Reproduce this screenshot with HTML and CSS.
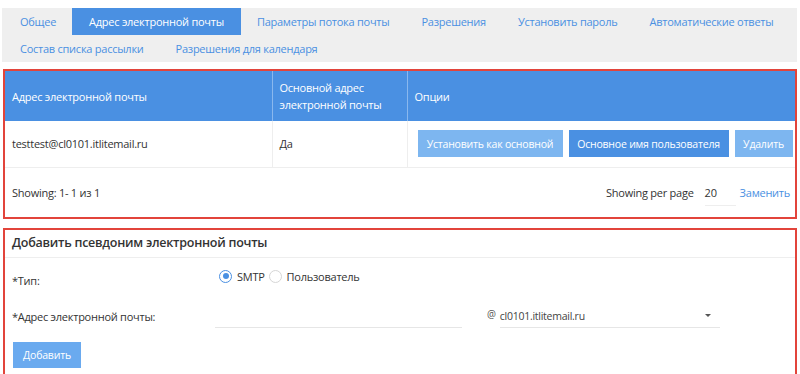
FILE: index.html
```html
<!DOCTYPE html>
<html lang="ru">
<head>
<meta charset="utf-8">
<link rel="stylesheet" href="styles.css">
</head>
<body>
<nav class="tabs">
  <a class="tab">Общее</a>
  <a class="tab active">Адрес электронной почты</a>
  <a class="tab">Параметры потока почты</a>
  <a class="tab">Разрешения</a>
  <a class="tab">Установить пароль</a>
  <a class="tab">Автоматические ответы</a>
  <a class="tab">Состав списка рассылки</a>
  <a class="tab">Разрешения для календаря</a>
</nav>

<section class="panel list">
  <table class="grid">
    <thead>
      <tr>
        <th class="c1">Адрес электронной почты</th>
        <th class="c2">Основной адрес<br>электронной почты</th>
        <th class="c3">Опции</th>
      </tr>
    </thead>
    <tbody>
      <tr>
        <td class="c1">testtest@cl0101.itlitemail.ru</td>
        <td class="c2">Да</td>
        <td class="c3">
          <div class="actions">
            <button class="btn light">Установить как основной</button>
            <button class="btn dark">Основное имя пользователя</button>
            <button class="btn light">Удалить</button>
          </div>
        </td>
      </tr>
    </tbody>
  </table>
  <div class="pager">
    <span>Showing: 1- 1 из 1</span>
    <div class="perpage">
      <span>Showing per page</span>
      <span class="num">20</span>
      <a class="link">Заменить</a>
    </div>
  </div>
</section>

<section class="panel form">
  <h2 class="form-title">Добавить псевдоним электронной почты</h2>
  <div class="row type-row">
    <span class="label">*Тип:</span>
    <div class="radios">
      <span class="radio on"></span><span class="rlabel">SMTP</span>
      <span class="radio"></span><span class="rlabel">Пользователь</span>
    </div>
  </div>
  <div class="row addr-row">
    <span class="label">*Адрес электронной почты:</span>
    <div class="addr">
      <span class="input"></span>
      <span class="at">@</span>
      <span class="select">cl0101.itlitemail.ru<span class="caret"></span></span>
    </div>
  </div>
  <button class="btn add">Добавить</button>
</section>
</body>
</html>
```

FILE: styles.css
```css
* { box-sizing: border-box; }
html, body { margin: 0; padding: 0; background: #fff; }
body {
  font-family: "Open Sans", "Noto Sans", sans-serif;
  font-size: 11px;
  letter-spacing: -0.25px;
  color: #333;
  width: 800px;
  height: 374px;
  overflow: hidden;
}

.tabs {
  margin: 8px 3px 0 2px;
  background: #efefef;
  display: flex;
  flex-wrap: wrap;
  height: 54px;
  padding-left: 2px;
}
.tab {
  display: block;
  height: 27px;
  line-height: 28px;
  padding: 0 16px;
  color: #4a90e2;
  white-space: nowrap;
}
.tab.active { background: #4a90e2; color: #fff; padding: 0 17px; }

.panel {
  margin: 7px 3px 0 3px;
  border: 2px solid #e2443b;
}

.grid {
  width: 100%;
  border-collapse: collapse;
  table-layout: fixed;
}
.grid .c1 { width: 267px; }
.grid .c2 { width: 135px; }
.grid th {
  background: #4a90e2;
  color: #fff;
  font-weight: normal;
  text-align: left;
  height: 50px;
  padding: 0 7px;
  line-height: 17px;
  border-right: 1px solid #8ab8ee;
  vertical-align: middle;
}
.grid th:last-child { border-right: none; }
.grid td {
  height: 46px;
  padding: 0 7px;
  border-right: 1px solid #eeeeee;
  border-bottom: 1px solid #eeeeee;
  vertical-align: middle;
}
.grid td:last-child { border-right: none; padding: 0 0 0 10px; }

.actions { display: flex; gap: 6px; }
.btn {
  font-family: inherit;
  font-size: 10.5px;
  letter-spacing: -0.2px;
  color: #fff;
  border: none;
  height: 27px;
  padding: 0;
  white-space: nowrap;
  cursor: pointer;
}
.btn.light { background: #7db6f0; }
.btn.dark { background: #4a90e2; }
.actions .btn:nth-child(1) { width: 145px; }
.actions .btn:nth-child(2) { width: 160px; }
.actions .btn:nth-child(3) { width: 58px; }

.pager {
  height: 49px;
  display: flex;
  align-items: center;
  justify-content: space-between;
  padding: 0 5px 0 7px;
}
.perpage { display: flex; align-items: center; }
.perpage .num {
  width: 31px;
  margin-left: 11px;
  padding-bottom: 5px;
  margin-top: 6px;
  border-bottom: 1px solid #eeeeee;
}
.perpage .link { color: #4a90e2; margin-left: 4px; }

.form { margin-top: 9px; height: 160px; }
.form-title {
  margin: 0;
  font-size: 12.5px;
  font-weight: 600;
  color: #333;
  height: 28px;
  line-height: 26px;
  padding: 0 7px;
  border-bottom: 1px solid #eeeeee;
}
.row { display: flex; padding: 0 7px; }
.label { width: 203px; }
.type-row { height: 40px; padding-top: 11px; align-items: flex-start; }
.type-row .label { padding-top: 4px; line-height: 15px; }
.radios { display: flex; align-items: center; line-height: 15px; }
.radio {
  width: 13px; height: 13px;
  border-radius: 50%;
  border: 1px solid #d6d6d6;
  background: #fff;
  margin-left: 4px;
  position: relative;
}
.radio.on { border-color: #4a90e2; }
.radio.on::after {
  content: "";
  position: absolute;
  left: 2.5px; top: 2.5px;
  width: 6px; height: 6px;
  border-radius: 50%;
  background: #4a90e2;
}
.rlabel { margin-left: 5px; }

.addr-row { height: 30px; align-items: flex-end; }
.addr-row .label { padding-bottom: 4px; line-height: 15px; }
.addr { display: flex; align-items: flex-end; }
.input {
  display: block;
  width: 247px;
  height: 24px;
  border-bottom: 1px solid #e6e6e6;
}
.at { margin-left: 25px; margin-bottom: 8px; font-size: 10px; color: #555; line-height: 12px; }
.select {
  margin-left: 4px;
  width: 220px;
  padding-bottom: 3px;
  border-bottom: 1px solid #e6e6e6;
  position: relative;
  font-size: 10.5px;
  line-height: 15px;
  color: #444;
}
.caret {
  position: absolute;
  right: 9px; top: 5px;
  border-left: 3px solid transparent;
  border-right: 3px solid transparent;
  border-top: 3px solid #555;
}
.btn.add {
  display: block;
  margin: 14px 0 0 8px;
  width: 68px;
  height: 26px;
  background: #6aaaef;
  padding: 0;
}
```
